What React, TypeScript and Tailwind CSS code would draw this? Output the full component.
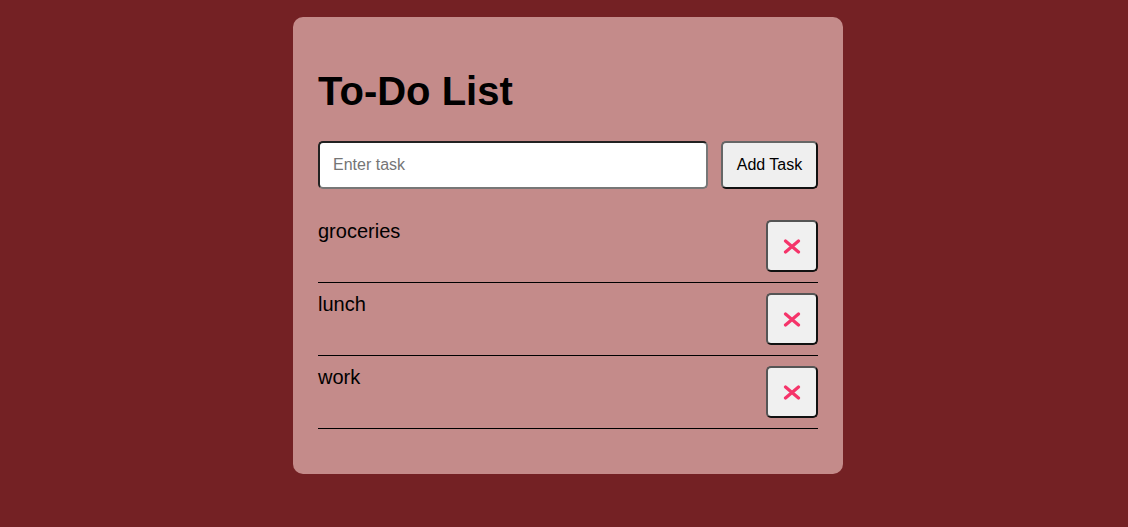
import { useState } from 'react'

const initialTasks = ['groceries', 'lunch', 'work']

function CrossIcon() {
  return (
    <svg width="18" height="15" viewBox="0 0 18 15" aria-hidden="true">
      <path
        d="M2.5 2 L15.5 13 M15.5 2 L2.5 13"
        stroke="#f5346a"
        strokeWidth="3.2"
        strokeLinecap="round"
        fill="none"
      />
    </svg>
  )
}

export default function App() {
  const [tasks, setTasks] = useState<string[]>(initialTasks)
  const [value, setValue] = useState('')

  const addTask = () => {
    const t = value.trim()
    if (!t) return
    setTasks([...tasks, t])
    setValue('')
  }

  return (
    <div className="min-h-[527px] bg-[#742124] pt-[17px] pl-[8px] font-['Liberation_Sans',Arial,sans-serif]">
      <div className="mx-auto w-[550px] rounded-[10px] bg-[#c48b8a] px-[25px] pt-[51px] pb-[45px]">
        {/* Title */}
        <h1 className="text-[40px] leading-[46px] font-bold text-black">To-Do List</h1>

        {/* Input row */}
        <div className="mt-[27px] flex gap-[13px]">
          <input
            value={value}
            onChange={(e) => setValue(e.target.value)}
            onKeyDown={(e) => {
              if (e.key === 'Enter') addTask()
            }}
            placeholder="Enter task"
            className="h-[48px] w-[390px] rounded-[5px] border-2 border-t-[#222] border-l-[#222] border-r-[#777] border-b-[#777] bg-white px-[13px] text-[16px] text-black outline-none placeholder:text-[#757575]"
          />
          <button
            onClick={addTask}
            className="h-[48px] w-[97px] rounded-[5px] border-2 border-t-[#666] border-l-[#666] border-r-[#111] border-b-[#111] bg-[#efefef] text-[16px] text-black"
          >
            Add Task
          </button>
        </div>

        {/* Tasks */}
        <ul className="mt-[21px]">
          {tasks.map((task, i) => (
            <li
              key={task + i}
              className="flex items-start justify-between border-b border-black py-[10px]"
            >
              <span className="text-[20px] leading-[23px] text-black">{task}</span>
              <button
                onClick={() => setTasks(tasks.filter((_, j) => j !== i))}
                aria-label="Delete task"
                className="grid h-[52px] w-[52px] place-items-center rounded-[5px] border-2 border-t-[#555] border-l-[#555] border-r-[#111] border-b-[#111] bg-[#f0f0f0]"
              >
                <CrossIcon />
              </button>
            </li>
          ))}
        </ul>
      </div>
    </div>
  )
}
